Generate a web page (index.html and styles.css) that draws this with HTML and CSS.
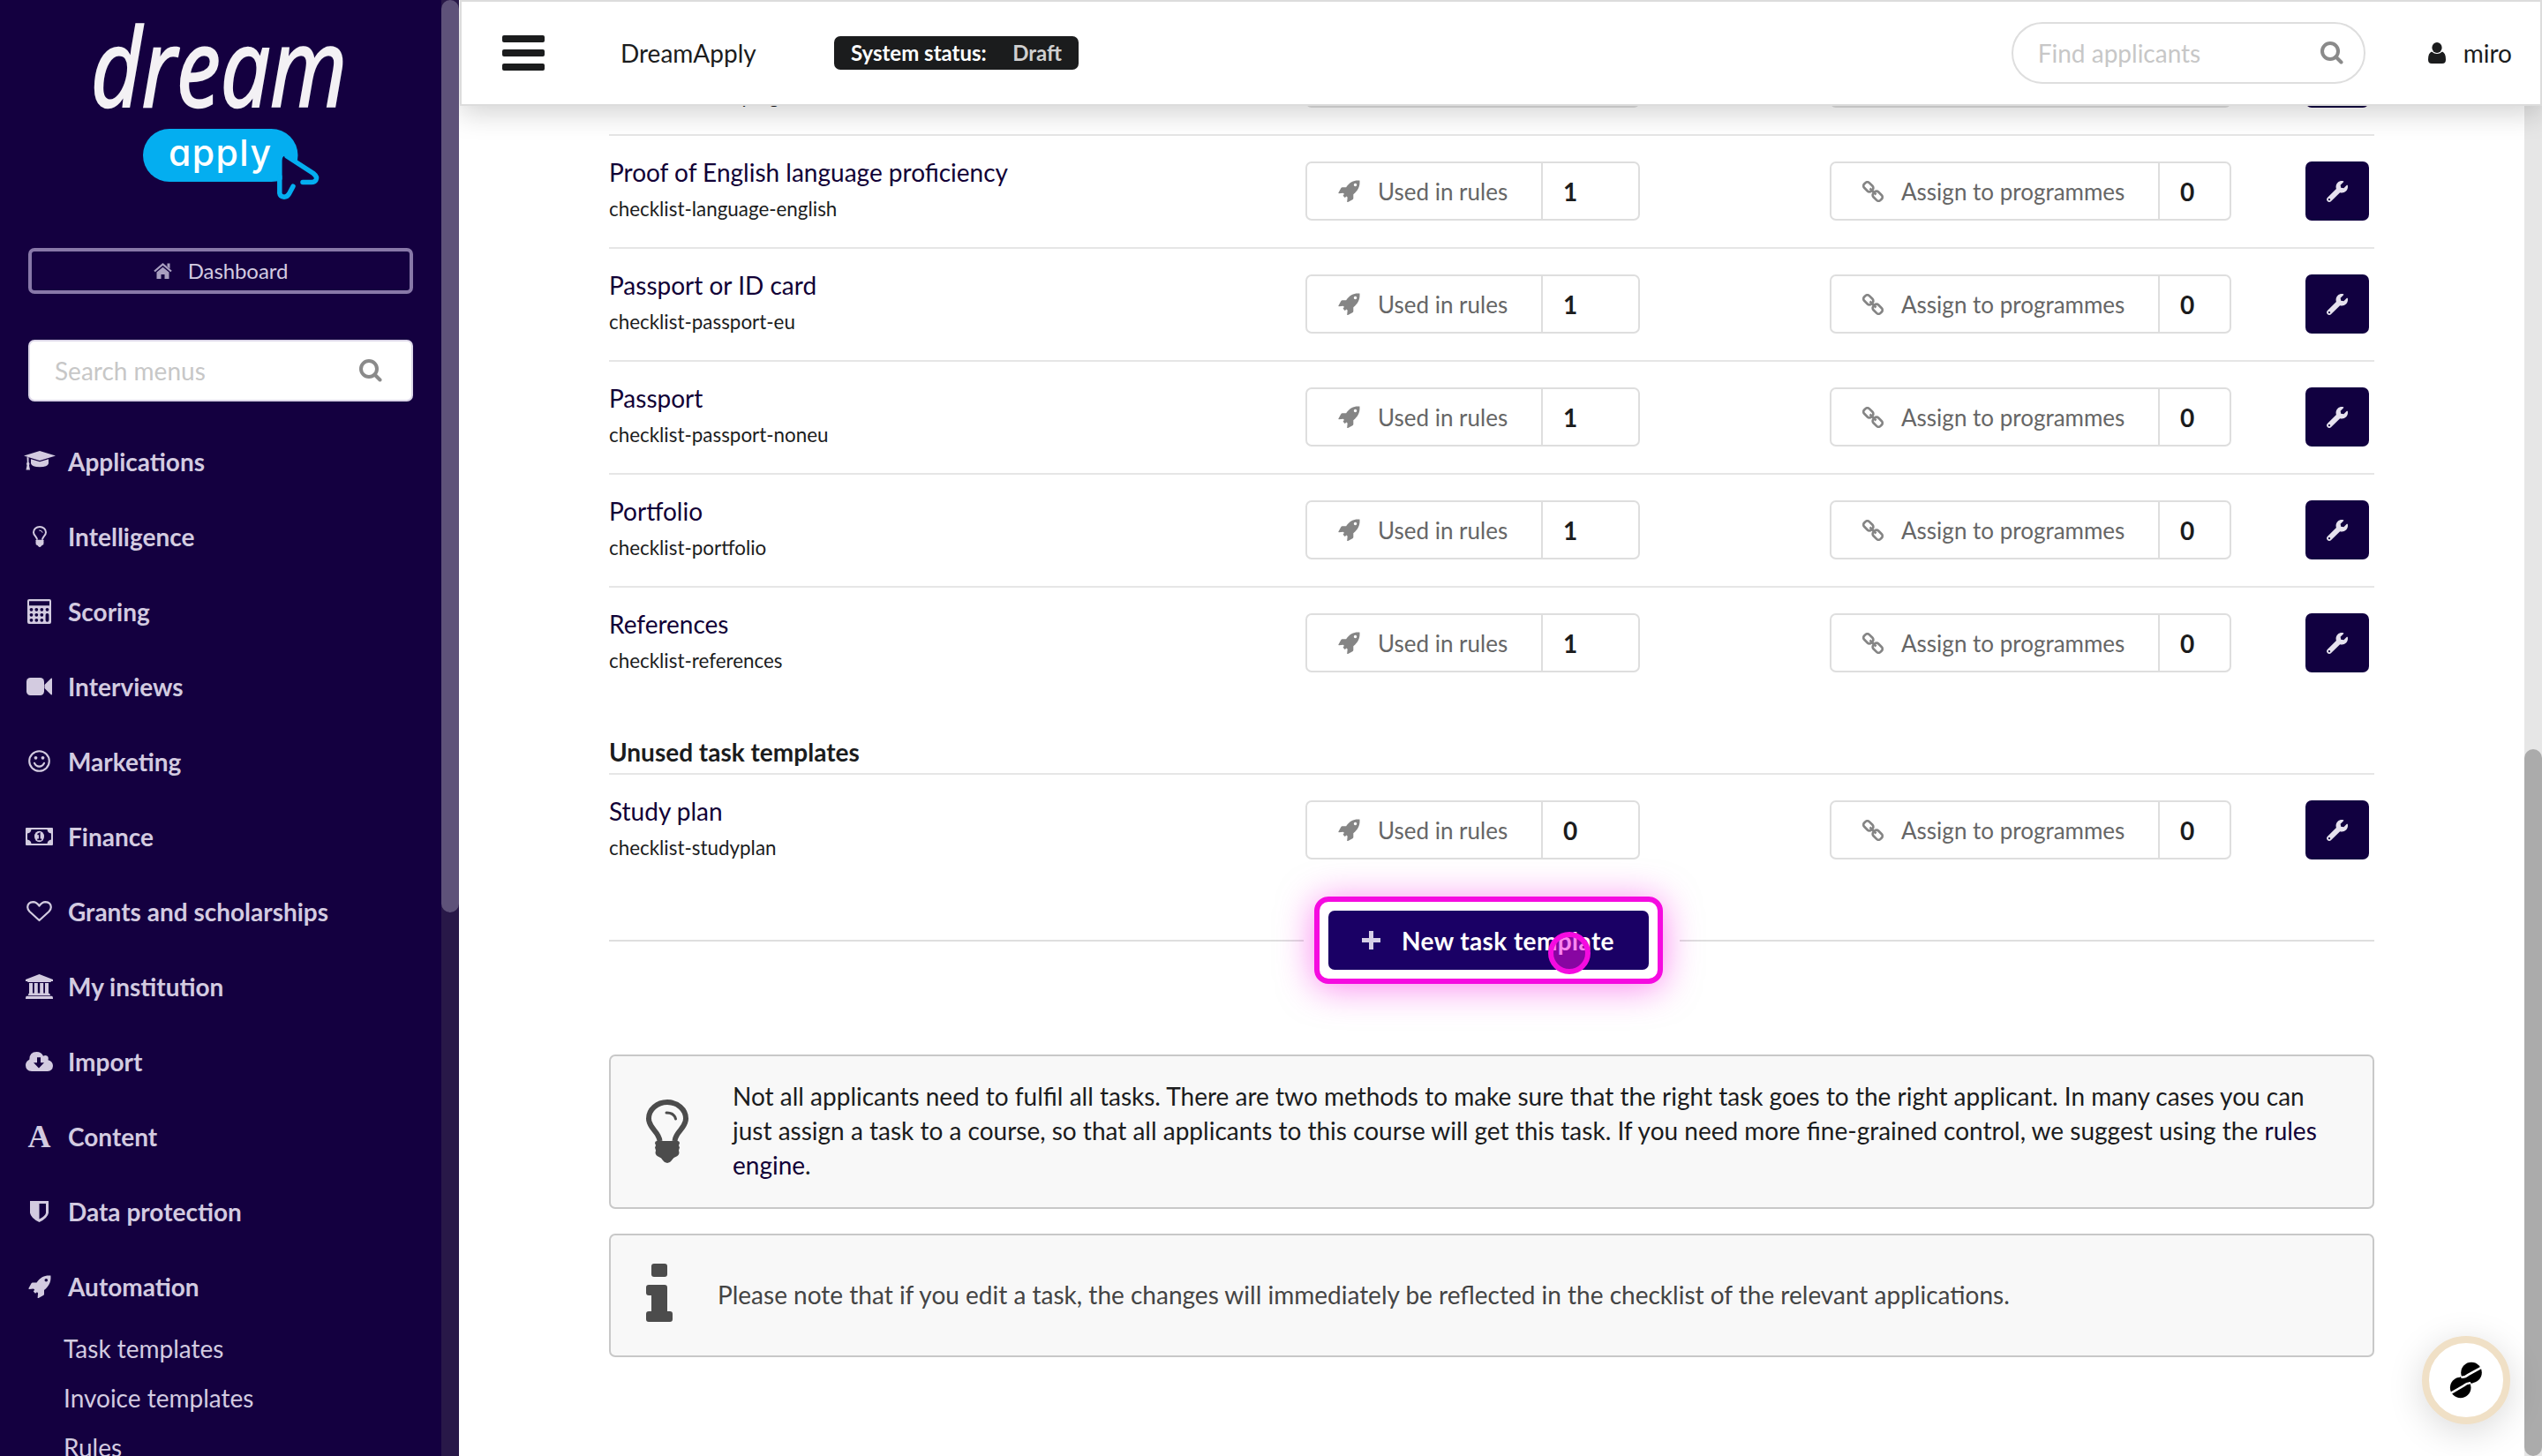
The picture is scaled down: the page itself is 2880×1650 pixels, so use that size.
FILE: index.html
```html
<!DOCTYPE html>
<html lang="en">
  <head>
    <meta charset="UTF-8" />
    <meta name="viewport" content="width=device-width, initial-scale=1.0" />
    <title>Task templates - DreamApply</title>
    <link rel="stylesheet" href="styles.css">
  </head>
  <body>
    <!-- shared icons -->
    <svg class="sprite">
      <symbol id="i-rocket" viewBox="0 0 26 26"><path fill-rule="evenodd" d="M25.4.6C19 0 14 2 9.5 8.5H5Q4 8.5 3.4 9.5L.4 15q-.3.8.6.9l4.9-.5 1.3 1.1-1.4 2 2.2 2.2 2-1.4 1.1 1.3-.5 4.9q.1.9.9.6l5.5-3q1-.6 1-1.6v-4.5C24 12 26 7 25.4.6ZM20.3 3.9a1.8 1.8 0 1 0 0 3.6 1.8 1.8 0 0 0 0-3.6Z" /></symbol>
      <symbol id="i-link" viewBox="0 0 24 24"><g fill="none" stroke="currentColor" stroke-width="2.7"><rect x="-5.6" y="-4" width="11.2" height="8" rx="3" transform="translate(6.8 6.8) rotate(45)" /><rect x="-5.6" y="-4" width="11.2" height="8" rx="3" transform="translate(17.2 17.2) rotate(45)" /><path d="M8.5 8.5l7 7" /></g></symbol>
      <symbol id="i-wrench" viewBox="0 0 512 512"><path d="M507.73 109.1c-2.24-9.03-13.54-12.09-20.12-5.51l-74.36 74.36-67.88-11.31-11.31-67.88 74.36-74.36c6.62-6.62 3.43-17.9-5.66-20.16-47.38-11.74-99.55.91-136.58 37.93-39.64 39.64-50.55 97.1-34.05 147.2L18.74 402.76c-24.99 24.99-24.99 65.51 0 90.5 24.99 24.99 65.51 24.99 90.5 0l213.21-213.21c50.12 16.71 107.47 5.68 147.37-34.22 37.07-37.07 49.7-89.32 37.91-136.73zM64 472c-13.25 0-24-10.75-24-24 0-13.26 10.75-24 24-24s24 10.74 24 24c0 13.25-10.75 24-24 24z" /></symbol>
      <symbol id="i-search" viewBox="0 0 26 26"><g fill="none" stroke="currentColor" stroke-width="4"><circle cx="11" cy="11" r="9" /><path d="M17.5 17.5l6 6" stroke-linecap="round" /></g></symbol>
      <symbol id="i-bulb" viewBox="0 0 48 72"><path d="M15.500 47C14.500 36 3 33 3 21.500a21 18.500 0 0 1 42 0C45 33 33.500 36 32.500 47" fill="none" stroke="currentColor" stroke-width="6" /><path d="M23 15q9 0 10.500 7" fill="none" stroke="currentColor" stroke-width="3" stroke-linecap="round" /><path d="M12 47h24q2 0 2 2.500l-1 2.500 1 2.500-1 3 .5 3q-.5 3-4 4.500-3 1-4.500 4-2 3-5 3t-5-3q-1.500-3-4.500-4-3.500-1.500-4-4.500l.5-3-1-3 1-2.500-1-2.500q0-2.500 2-2.500Z" /></symbol>
    </svg>

    <aside class="sidebar">
      <div class="sidebar-content">
        <svg class="logo" viewBox="0 0 500 281">
          <text class="logo-dream" x="103" y="121" textLength="290" lengthAdjust="spacingAndGlyphs">dream</text>
          <rect x="162" y="146" width="175.500" height="60" rx="30" fill="#04aef0" />
          <path d="M319.600 182q0-6 5-5L354 197 356 203 343 204 332 211 325 220h-5.400Z" fill="#140040" />
          <path d="M316.800 200v19q.5 4 5.200 4.200 3.500 0 5.500-3.500l4.500-8.500M325 177l30 19.500q5 4 3 7.500-1.500 2.500-5 2.500h-10" fill="none" stroke="#04aef0" stroke-width="5.500" stroke-linecap="round" />
          <text class="logo-apply" x="191" y="188" textLength="116" lengthAdjust="spacing">apply</text>
        </svg>

        <a class="dashboard-btn">
          <svg width="21" height="18" viewBox="0 0 21 18"><path d="M1 9.500L10.500 1.500 20 9.500" fill="none" stroke="currentColor" stroke-width="2.200" /><path d="M15.500.5h3v6l-3-2.500zM3.500 10.500l7-5.800 7 5.800V18h-5v-5h-4v5h-5z" /></svg>
          <span>Dashboard</span>
        </a>

        <div class="menu-search">
          <span>Search menus</span>
          <svg width="26" height="26"><use href="#i-search" /></svg>
        </div>

        <nav class="menu">
          <a class="menu-item"><i><svg width="36" height="24" viewBox="0 0 36 24"><path d="M18 0l18 5.500L18 11 0 5.500zM8 9.300l10 3 10-3v5q-1 4-10 4t-10-4zM3.500 7l2 .6v5l1 2-.5 2 1 5H2.500l1-5-.5-2 .8-2z" /></svg></i>Applications</a>
          <a class="menu-item"><i><svg width="16" height="24"><use href="#i-bulb" /></svg></i>Intelligence</a>
          <a class="menu-item"><i><svg width="27" height="28" viewBox="0 0 27 28"><path fill-rule="evenodd" d="M2 0h23q2 0 2 2v24q0 2-2 2H2q-2 0-2-2V2q0-2 2-2ZM2 2.200v5h23v-5Z" /><g fill="#140040"><circle cx="4.500" cy="11.800" r="1.900" /><circle cx="10.300" cy="11.800" r="1.900" /><circle cx="16.300" cy="11.800" r="1.900" /><circle cx="22.500" cy="11.800" r="1.900" /><circle cx="4.500" cy="17.800" r="1.900" /><circle cx="10.300" cy="17.800" r="1.900" /><circle cx="16.300" cy="17.800" r="1.900" /><circle cx="4.500" cy="23.800" r="1.900" /><circle cx="10.300" cy="23.800" r="1.900" /><circle cx="16.300" cy="23.800" r="1.900" /><rect x="20.600" y="15.900" width="3.800" height="9.800" rx="1.900" /></g></svg></i>Scoring</a>
          <a class="menu-item"><i><svg width="29" height="20" viewBox="0 0 29 20"><rect width="20" height="20" rx="4.500" /><path d="M20.500 8L27.800.8q1.200-.6 1.200.6v17.200q0 1.200-1.200.6L20.500 12z" /></svg></i>Interviews</a>
          <a class="menu-item"><i><svg width="25" height="25" viewBox="0 0 25 25"><circle cx="12.500" cy="12.500" r="11.300" fill="none" stroke="currentColor" stroke-width="2.100" /><circle cx="8.500" cy="8.800" r="1.900" /><circle cx="16.500" cy="8.800" r="1.900" /><path d="M7 14.800q1.800 3.800 5.500 3.800t5.500-3.800" fill="none" stroke="currentColor" stroke-width="2.100" stroke-linecap="round" /></svg></i>Marketing</a>
          <a class="menu-item"><i><svg width="31" height="20" viewBox="0 0 31 20"><path fill-rule="evenodd" d="M1 0h29q1 0 1 1v18q0 1-1 1H1q-1 0-1-1V1q0-1 1-1ZM6.500 2Q6 6 2 6.500v7Q6 14 6.500 18h18Q25 14 29 13.500v-7Q25 6 24.500 2Z" /><ellipse cx="15.500" cy="10" rx="5.500" ry="6.200" /><path d="M13.500 7.800l2.300-1.300v6.300M13.300 13.300h4.800" fill="none" stroke="#140040" stroke-width="1.700" /></svg></i>Finance</a>
          <a class="menu-item"><i><svg width="29" height="24" viewBox="0 0 29 24"><path d="M14.500 22L3.500 12Q1.200 9.500 1.200 7 1.500 1.500 7.500 1.200q3.800 0 7 4.300 3.200-4.300 7-4.300 6 .3 6.300 5.800 0 2.500-2.300 5Z" fill="none" stroke="currentColor" stroke-width="2.200" stroke-linejoin="round" /></svg></i>Grants and scholarships</a>
          <a class="menu-item"><i><svg width="31" height="28" viewBox="0 0 31 28"><path d="M15.500 0L31 6v2h-2.200v1H2.200V8H0V6zM4 10h4v11.500h1.800V10h4v11.500h2.400V10h4v11.500H22V10h4v11.500q2 0 2 2.500H3q0-2.500 1-2.500zM0 28q0-3.200 1.500-3.200h28Q31 24.800 31 28z" /></svg></i>My institution</a>
          <a class="menu-item"><i><svg width="31" height="22" viewBox="0 0 31 22"><path fill-rule="evenodd" d="M7 22Q0 21.500 0 15q0-4 4.300-6.300Q4.300 0 12.500 0q5.500 0 7.500 4.800 2-1.500 4.200-.3 2.300 1.500 1.300 4.700Q31 11 31 16q-.5 5.700-6 6ZM13 6.200v6H9l6 6.300 6-6.300h-4v-6Z" /></svg></i>Import</a>
          <a class="menu-item"><i class="letter">A</i>Content</a>
          <a class="menu-item"><i><svg width="21" height="24" viewBox="0 0 21 24"><path fill-rule="evenodd" d="M0 0h21v13.500Q20 19.500 10.500 24 1 19.500 0 13.500ZM10.500 3v17.500q7-3.500 7.500-7V3Z" /></svg></i>Data protection</a>
          <a class="menu-item"><i><svg width="26" height="26"><use href="#i-rocket" /></svg></i>Automation</a>
          <a class="submenu-item">Task templates</a>
          <a class="submenu-item">Invoice templates</a>
          <a class="submenu-item">Rules</a>
        </nav>
      </div>
      <div class="sidebar-scroll"><div class="sidebar-thumb"></div></div>
    </aside>

    <div class="page">
      <header class="topbar">
        <div class="burger"><b></b><b></b><b></b></div>
        <span class="brand">DreamApply</span>
        <div class="status"><strong>System status:</strong><span>Draft</span></div>
        <div class="find">
          <span>Find applicants</span>
          <svg width="26" height="26"><use href="#i-search" /></svg>
        </div>
        <div class="user">
          <svg width="20" height="24" viewBox="0 0 20 24"><ellipse cx="10" cy="6" rx="5.600" ry="6" /><path d="M4 10.500q6 5 12 0 4 1.500 4 9 0 4.500-4 4.500H4q-4 0-4-4.500 0-7.500 4-9z" /></svg>
          <span>miro</span>
        </div>
      </header>

      <div class="body-row">
        <main class="content">
          <div class="task">
            <div class="task-name"><small class="only">checklist-money-ug</small></div>
            <div class="counter rules"><span></span></div>
            <div class="counter assign"><span></span></div>
            <a class="edit"></a>
          </div>
          <div class="task">
            <div class="task-name"><a>Proof of English language proficiency</a><small>checklist-language-english</small></div>
            <div class="counter rules"><span><svg width="25" height="25"><use href="#i-rocket" /></svg>Used in rules</span><b>1</b></div>
            <div class="counter assign"><span><svg width="24" height="24"><use href="#i-link" /></svg>Assign to programmes</span><b>0</b></div>
            <a class="edit"><svg width="24" height="24"><use href="#i-wrench" /></svg></a>
          </div>
          <div class="task">
            <div class="task-name"><a>Passport or ID card</a><small>checklist-passport-eu</small></div>
            <div class="counter rules"><span><svg width="25" height="25"><use href="#i-rocket" /></svg>Used in rules</span><b>1</b></div>
            <div class="counter assign"><span><svg width="24" height="24"><use href="#i-link" /></svg>Assign to programmes</span><b>0</b></div>
            <a class="edit"><svg width="24" height="24"><use href="#i-wrench" /></svg></a>
          </div>
          <div class="task">
            <div class="task-name"><a>Passport</a><small>checklist-passport-noneu</small></div>
            <div class="counter rules"><span><svg width="25" height="25"><use href="#i-rocket" /></svg>Used in rules</span><b>1</b></div>
            <div class="counter assign"><span><svg width="24" height="24"><use href="#i-link" /></svg>Assign to programmes</span><b>0</b></div>
            <a class="edit"><svg width="24" height="24"><use href="#i-wrench" /></svg></a>
          </div>
          <div class="task">
            <div class="task-name"><a>Portfolio</a><small>checklist-portfolio</small></div>
            <div class="counter rules"><span><svg width="25" height="25"><use href="#i-rocket" /></svg>Used in rules</span><b>1</b></div>
            <div class="counter assign"><span><svg width="24" height="24"><use href="#i-link" /></svg>Assign to programmes</span><b>0</b></div>
            <a class="edit"><svg width="24" height="24"><use href="#i-wrench" /></svg></a>
          </div>
          <div class="task">
            <div class="task-name"><a>References</a><small>checklist-references</small></div>
            <div class="counter rules"><span><svg width="25" height="25"><use href="#i-rocket" /></svg>Used in rules</span><b>1</b></div>
            <div class="counter assign"><span><svg width="24" height="24"><use href="#i-link" /></svg>Assign to programmes</span><b>0</b></div>
            <a class="edit"><svg width="24" height="24"><use href="#i-wrench" /></svg></a>
          </div>

          <h4>Unused task templates</h4>
          <div class="task">
            <div class="task-name"><a>Study plan</a><small>checklist-studyplan</small></div>
            <div class="counter rules"><span><svg width="25" height="25"><use href="#i-rocket" /></svg>Used in rules</span><b>0</b></div>
            <div class="counter assign"><span><svg width="24" height="24"><use href="#i-link" /></svg>Assign to programmes</span><b>0</b></div>
            <a class="edit"><svg width="24" height="24"><use href="#i-wrench" /></svg></a>
          </div>

          <div class="new-task">
            <div class="highlight">
              <button class="new-btn">
                <svg width="21" height="21" viewBox="0 0 21 21"><path d="M8 0h5v8h8v5h-8v8H8v-8H0V8h8z" /></svg>
                <span>New task template</span>
              </button>
              <div class="pointer"></div>
            </div>
          </div>

          <div class="message tip">
            <svg width="48" height="72"><use href="#i-bulb" /></svg>
            <p>Not all applicants need to fulfil all tasks. There are two methods to make sure that the right task goes to the right applicant. In many cases you can just assign a task to a course, so that all applicants to this course will get this task. If you need more fine-grained control, we suggest using the <a>rules engine</a>.</p>
          </div>
          <div class="message note">
            <svg width="30" height="66" viewBox="0 0 30 66"><rect x="6" width="18" height="15" rx="3" /><path d="M3 24h18q3 0 3 3v27h3q3 0 3 3v6q0 3-3 3H3q-3 0-3-3v-6q0-3 3-3h3V36H3q-3 0-3-3v-6q0-3 3-3z" /></svg>
            <p>Please note that if you edit a task, the changes will immediately be reflected in the checklist of the relevant applications.</p>
          </div>
        </main>
        <div class="page-scroll"><div class="page-thumb"></div></div>
      </div>
    </div>

    <div class="helper">
      <svg width="40" height="44" viewBox="-20 -22 40 44"><circle cx="6" cy="-8.500" r="11.800" /><circle cx="-6.300" cy="8.500" r="11.800" /><path d="M-7-4L-3 8 5 4Z" /><path d="M7.500 4L3-8-6-1Z" /><path d="M-5.500-3.300Q-1-3 3-6.500L17-14.200M-17 14.700L-3 6.500Q1 3 5 3.300" fill="none" stroke="#fff" stroke-width="2.600" /></svg>
    </div>
  </body>
</html>
```
FILE: styles.css
```css
* {
  box-sizing: border-box;
}
html,
body {
  height: 100%;
  margin: 0;
  overflow: hidden;
}
body {
  display: flex;
  background-color: #fff;
  color: #1b1c1d;
  font-family: Lato, "Liberation Sans", sans-serif;
  font-size: 28px;
  line-height: 40px;
}
svg {
  display: block;
  flex: none;
  fill: currentColor;
}
.sprite {
  position: absolute;
  width: 0;
  height: 0;
}

/* sidebar */
.sidebar {
  display: flex;
  flex: none;
  width: 520px;
  height: 1650px;
  overflow: hidden;
  background-color: #140040;
  color: #d3cbe0;
}
.sidebar-content {
  width: 500px;
}
.logo {
  width: 500px;
  height: 281px;
}
.logo-dream {
  font-family: "Open Sans", sans-serif;
  font-style: italic;
  font-size: 122px;
  fill: #f3f1f4;
  stroke: #f3f1f4;
  stroke-width: 2.5px;
}
.logo-apply {
  font-family: Inter, sans-serif;
  font-feature-settings: "cv11";
  font-weight: 500;
  font-size: 41px;
  fill: #fff;
}
.dashboard-btn {
  display: flex;
  align-items: center;
  justify-content: center;
  gap: 18px;
  width: 436px;
  height: 52px;
  margin: 0 32px;
  border: 4px solid #8878a8;
  border-radius: 7px;
  font-size: 24px;
  letter-spacing: -0.1px;
}
.dashboard-btn svg {
  color: #a99fc0;
}
.menu-search {
  display: flex;
  align-items: center;
  justify-content: space-between;
  width: 436px;
  height: 70px;
  margin: 52px 32px 25px;
  padding: 0 33px 0 28px;
  border: 2px solid #dcd6e8;
  border-radius: 7px;
  background-color: #fff;
  color: #c7c7c7;
}
.menu-search svg,
.find svg {
  color: #8a8a8a;
}
.menu-item {
  display: flex;
  align-items: center;
  gap: 16px;
  height: 85px;
  padding-left: 28px;
  font-weight: bold;
}
.menu-item i {
  display: flex;
  justify-content: center;
  width: 33px;
}
.menu-item .letter {
  font: bold 36px/40px "Liberation Serif", serif;
}
.submenu-item {
  display: block;
  height: 56px;
  padding-left: 72px;
  line-height: 56px;
}
.sidebar-scroll {
  width: 20px;
  background-color: #281848;
}
.sidebar-thumb {
  height: 1034px;
  border-radius: 10px;
  background-color: #5e5279;
}

/* top bar */
.page {
  flex: 1;
  height: 1650px;
  overflow: hidden;
}
.topbar {
  display: flex;
  align-items: center;
  position: relative;
  z-index: 2;
  height: 120px;
  margin-left: 1px;
  padding: 0 32px 0 46px;
  border: 2px solid #dcdcdc;
  background-color: #fff;
  box-shadow: 0 8px 30px rgba(0, 0, 0, 0.18);
}
.burger {
  display: flex;
  flex-direction: column;
  gap: 8px;
  width: 48px;
}
.burger b {
  height: 8px;
  border-radius: 2px;
  background-color: #1b1c1d;
}
.brand {
  width: 155px;
  margin: 0 87px 0 86px;
}
.status {
  display: flex;
  align-items: center;
  justify-content: space-between;
  width: 277px;
  height: 38px;
  padding: 0 19px;
  border-radius: 7px;
  background-color: #1b1c1d;
  color: #fff;
  font-size: 24px;
}
.status span {
  color: #cfcfcf;
  font-weight: bold;
}
.find {
  display: flex;
  align-items: center;
  justify-content: space-between;
  width: 401px;
  height: 70px;
  margin-left: auto;
  padding: 0 23px 0 28px;
  border: 2px solid #dedede;
  border-radius: 35px;
  color: #c7c7c7;
}
.user {
  display: flex;
  align-items: center;
  gap: 20px;
  margin-left: 71px;
}

/* task list */
.body-row {
  display: flex;
  height: 1530px;
}
.content {
  flex: 1;
  margin-top: -96px;
  padding: 0 170px;
}
.task {
  display: grid;
  grid-template-columns: 789px 594px 539px 72px;
  height: 128px;
  padding-top: 29px;
  border-top: 2px solid #e6e6e6;
}
.task-name {
  margin-top: -8px;
}
.task-name a {
  display: block;
  color: #110036;
}
.task-name small {
  display: block;
  margin-top: 2px;
  font-size: 22.4px;
}
.task-name .only {
  margin-top: 42px;
}
.counter {
  display: flex;
  height: 67px;
  border: 2px solid #dedede;
  border-radius: 7px;
}
.counter span {
  display: flex;
  align-items: center;
  gap: 20px;
  padding-left: 35px;
  border-right: 2px solid #dedede;
  color: #666;
  font-size: 26px;
}
.counter svg {
  color: #858585;
}
.counter b {
  padding-left: 23px;
  line-height: 64px;
}
.rules {
  width: 379px;
}
.rules span {
  width: 267px;
}
.assign {
  width: 455px;
}
.assign span {
  width: 372px;
}
.edit {
  display: flex;
  align-items: center;
  justify-content: center;
  width: 72px;
  height: 67px;
  border-radius: 7px;
  background-color: #110040;
  color: #e6e2ee;
}
h4 {
  height: 84px;
  margin: 0;
  padding-top: 40px;
  font-size: 28px;
}

/* new task button with dividing line */
.new-task {
  display: flex;
  align-items: center;
  margin: 12px 0 80px;
}
.new-task::before,
.new-task::after {
  content: "";
  width: 787px;
  height: 2px;
  background-color: #dedede;
}
.highlight {
  position: relative;
  width: 395px;
  height: 99px;
  margin: 0 19px 0 12px;
  padding: 10px;
  border: 6px solid #f50be0;
  border-radius: 16px;
  box-shadow: 0 4px 40px rgba(245, 11, 224, 0.5);
}
.new-btn {
  display: flex;
  align-items: center;
  gap: 24px;
  width: 363px;
  height: 67px;
  padding: 0 0 0 38px;
  border: none;
  border-radius: 7px;
  background-color: #1a0065;
  color: #fff;
  font: bold 28px/40px Lato, sans-serif;
  letter-spacing: 0.4px;
  white-space: nowrap;
}
.new-btn svg {
  color: #d6cfe6;
}
.pointer {
  position: absolute;
  top: 34px;
  left: 259px;
  width: 48px;
  height: 48px;
  border: 6px solid #f50be0;
  border-radius: 50%;
  background-color: rgba(245, 11, 224, 0.5);
}

/* messages */
.message {
  display: flex;
  align-items: center;
  width: 2000px;
  padding: 0 40px;
  border: 2px solid #c8c8c8;
  border-radius: 7px;
  background-color: #f8f8f8;
}
.message svg {
  color: #4c4c4c;
}
.message p {
  margin: 0;
  line-height: 39.2px;
}
.tip {
  height: 175px;
  margin-bottom: 28px;
  padding-bottom: 2px;
}
.tip p {
  margin-left: 50px;
}
.tip a {
  color: #110036;
}
.note {
  height: 140px;
  color: #444;
}
.note svg {
  margin-bottom: 6px;
}
.note p {
  margin-left: 51px;
}

.page-scroll {
  flex: none;
  width: 20px;
  padding-top: 729px;
  background-color: #e6e6e6;
}
.page-thumb {
  height: 801px;
  border-radius: 10px;
  background-color: #ababab;
}
.helper {
  display: flex;
  align-items: center;
  justify-content: center;
  position: fixed;
  right: 36px;
  bottom: 36px;
  width: 100px;
  height: 100px;
  border: 8px solid #f0e0c6;
  border-radius: 50%;
  background-color: #fff;
  color: #000;
  box-shadow: 0 8px 40px rgba(0, 0, 0, 0.15);
}
```
